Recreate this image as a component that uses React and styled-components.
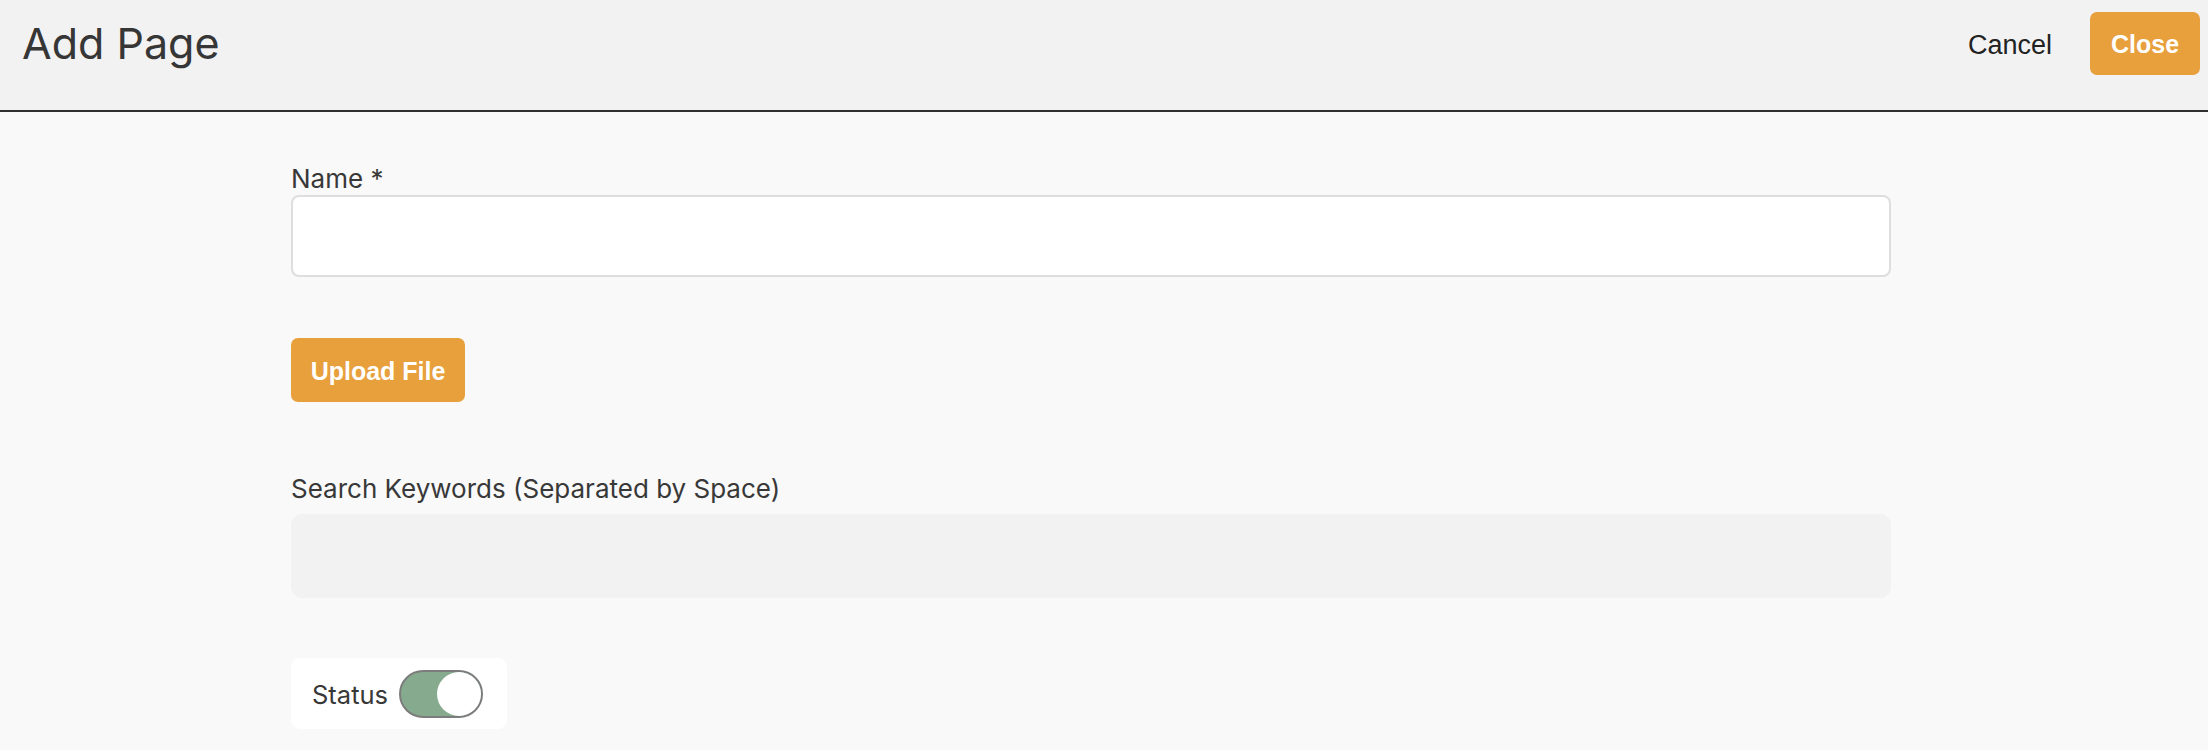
import React, { useState } from "react";
import styled, { createGlobalStyle } from "styled-components";

const GlobalStyle = createGlobalStyle`
  html, body { margin: 0; padding: 0; background: #f9f9f9; }
  body { font-family: Inter, "Noto Sans", sans-serif; color: #333; }
  * { box-sizing: border-box; }
`;

const Page = styled.div`
  min-height: 750px;
  background: #f9f9f9;
`;

const Header = styled.header`
  height: 112px;
  display: flex;
  align-items: flex-start;
  justify-content: space-between;
  padding: 12px 8px 0 22px;
  background: #f2f2f2;
  border-bottom: 2px solid #2f2f2f;
`;

const Title = styled.h1`
  margin: 0;
  font-family: Inter, sans-serif;
  font-weight: 400;
  font-size: 43px;
  line-height: 63px;
  color: #363636;
`;

const Actions = styled.div`
  display: flex;
  align-items: center;
  gap: 19px;
  height: 63px;
`;

const TextButton = styled.button`
  border: none;
  background: transparent;
  font-family: "Liberation Sans", Arial, sans-serif;
  font-size: 27px;
  color: #222;
  padding: 3px 19px 0;
  height: 63px;
  cursor: pointer;
`;

const PrimaryButton = styled.button`
  border: none;
  border-radius: 7px;
  background: #e8a03c;
  color: #fff;
  font-family: "Liberation Sans", Arial, sans-serif;
  font-weight: 700;
  font-size: 25px;
  height: ${(p) => p.$h || 64}px;
  width: ${(p) => p.$w}px;
  padding: 2px 0 0;
  cursor: pointer;
`;

const Form = styled.main`
  width: 1600px;
  margin-left: 291px;
  padding-top: 51px;
  display: flex;
  flex-direction: column;
  align-items: flex-start;
`;

const Label = styled.label`
  display: block;
  font-family: Inter, sans-serif;
  font-size: 26px;
  line-height: 31px;
  color: #383838;
  margin-bottom: ${(p) => p.$gap || 0}px;
`;

const Field = styled.div`
  width: 100%;
  margin-top: ${(p) => p.$mt || 0}px;
  margin-bottom: ${(p) => p.$mb || 0}px;
`;

const TextInput = styled.input`
  display: block;
  width: 100%;
  height: 82px;
  border: 2px solid #dedede;
  border-radius: 8px;
  background: #fff;
  font-family: Inter, sans-serif;
  font-size: 26px;
  padding: 0 16px;
  outline: none;
`;

const SoftInput = styled.input`
  display: block;
  width: 100%;
  height: 84px;
  border: none;
  border-radius: 11px;
  background: #f2f2f2;
  font-family: Inter, sans-serif;
  font-size: 26px;
  padding: 0 18px;
  outline: none;
`;

const StatusBox = styled.div`
  display: flex;
  align-items: center;
  gap: 11px;
  width: 216px;
  height: 71px;
  padding: 0 20px 0 21px;
  background: #fff;
  border-radius: 9px;
`;

const StatusText = styled.span`
  font-family: Inter, sans-serif;
  font-size: 25.5px;
  color: #383838;
  padding-top: 2px;
`;

const Track = styled.button`
  position: relative;
  width: 84px;
  height: 48px;
  border: 2px solid #7c7c7c;
  border-radius: 24px;
  background: ${(p) => (p.$on ? "#86aa8e" : "#ccc")};
  padding: 0;
  cursor: pointer;
`;

const Knob = styled.span`
  position: absolute;
  top: 0;
  left: ${(p) => (p.$on ? 36 : 0)}px;
  width: 44px;
  height: 44px;
  border-radius: 50%;
  background: #fff;
`;

export default function App() {
  const [on, setOn] = useState(true);
  return (
    <Page>
      <GlobalStyle />
      <Header>
        <Title>Add Page</Title>
        <Actions>
          <TextButton>Cancel</TextButton>
          <PrimaryButton $w={110} $h={63}>Close</PrimaryButton>
        </Actions>
      </Header>
      <Form>
        <Field $mb={61}>
          <Label $gap={1}>Name *</Label>
          <TextInput />
        </Field>
        <PrimaryButton $w={174} $h={64}>Upload File</PrimaryButton>
        <Field $mt={71} $mb={60}>
          <Label $gap={10}>Search Keywords (Separated by Space)</Label>
          <SoftInput />
        </Field>
        <StatusBox>
          <StatusText>Status</StatusText>
          <Track $on={on} onClick={() => setOn(!on)} aria-label="Status">
            <Knob $on={on} />
          </Track>
        </StatusBox>
      </Form>
    </Page>
  );
}
